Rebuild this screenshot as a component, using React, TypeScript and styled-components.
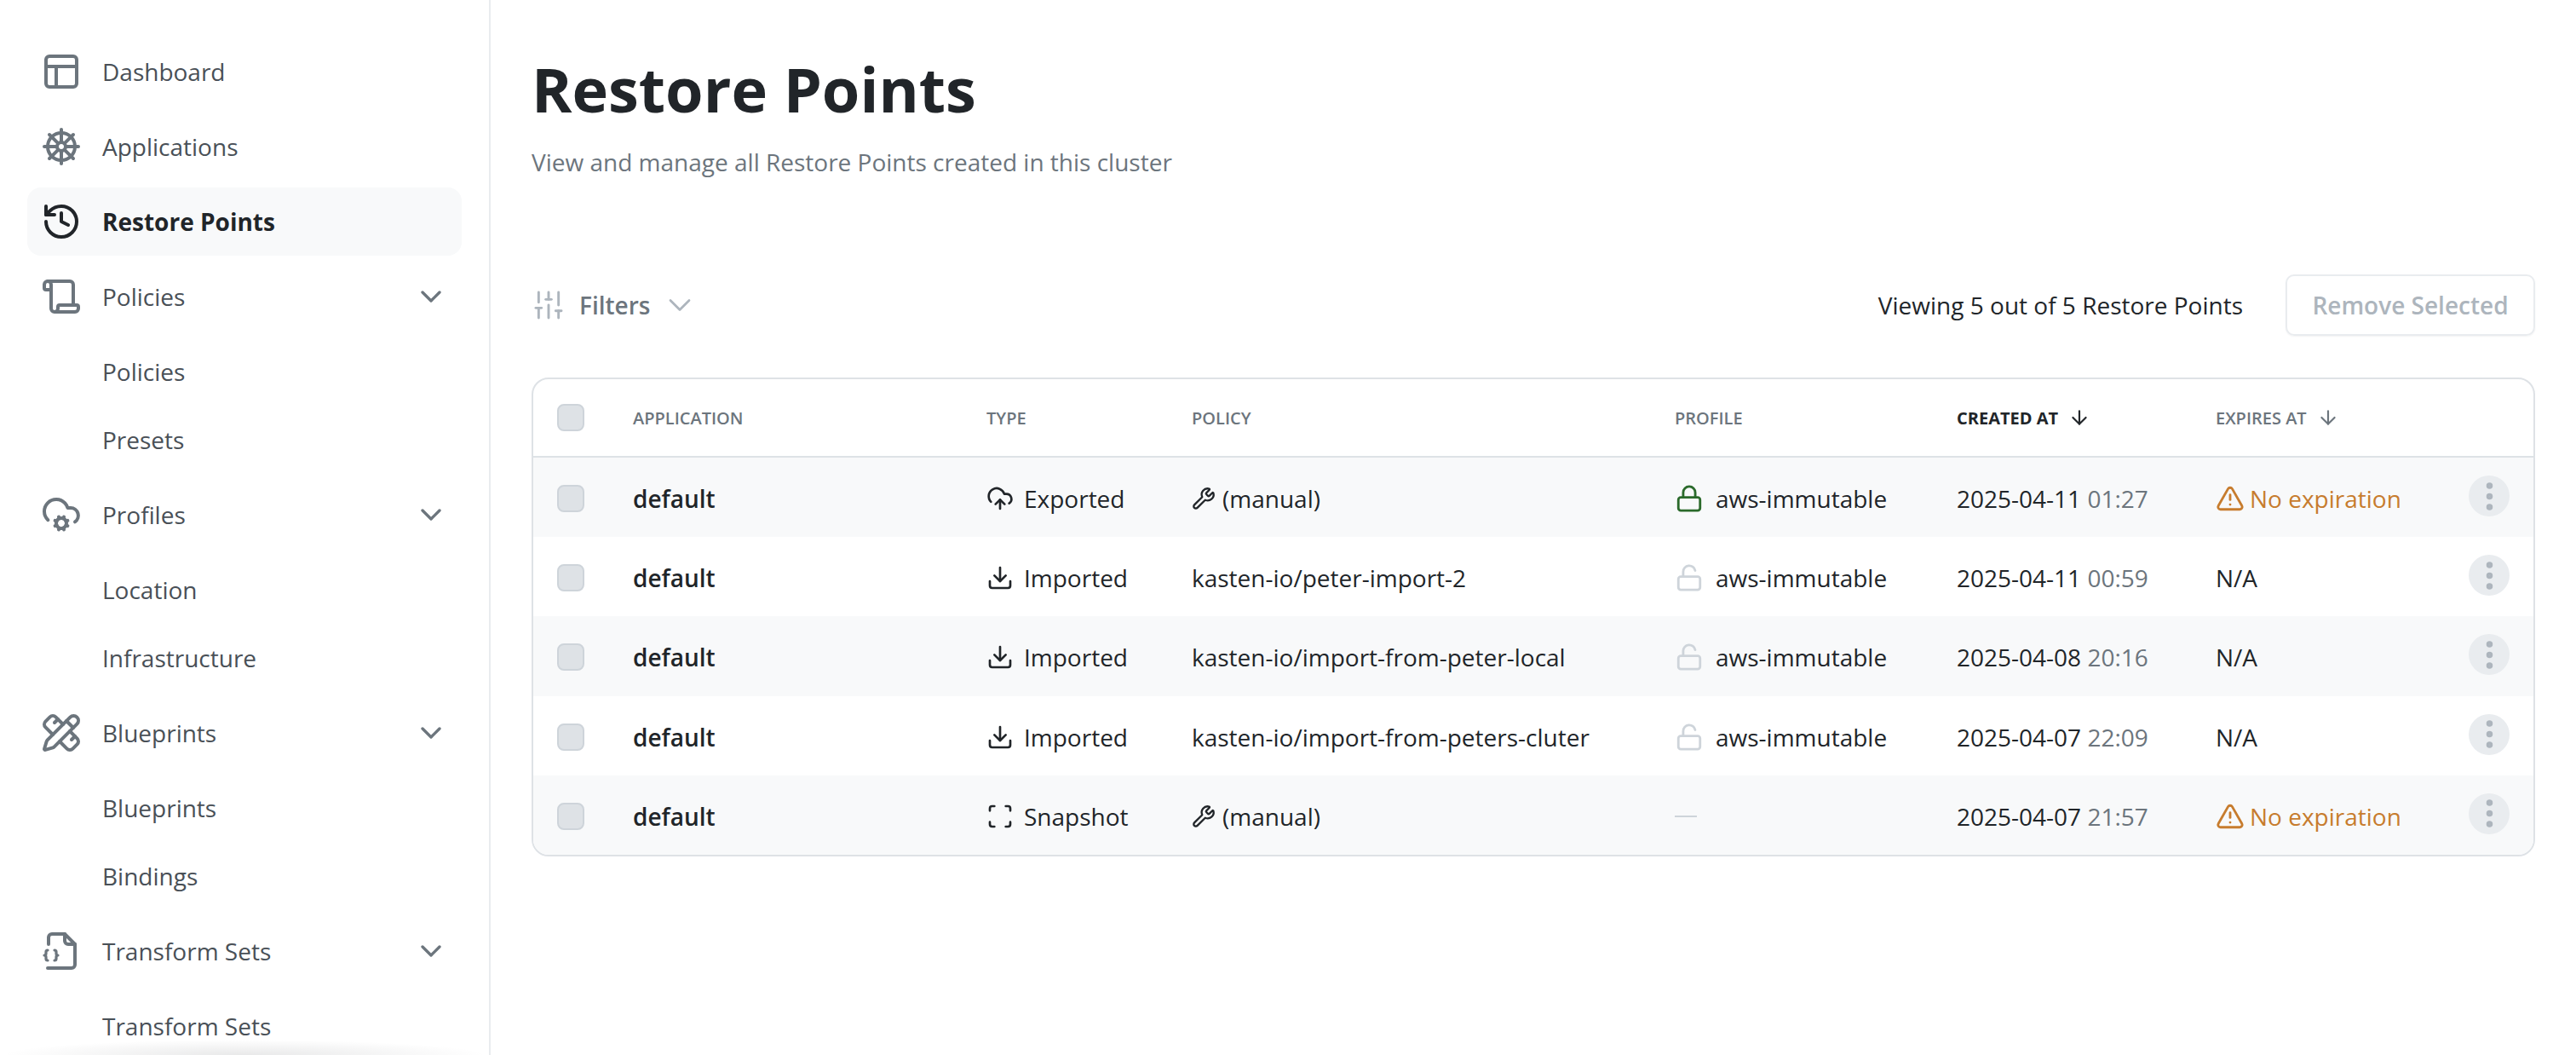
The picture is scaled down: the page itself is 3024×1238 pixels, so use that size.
import React from 'react';
import styled, { createGlobalStyle } from 'styled-components';
import {
  ArrowDown,
  ChevronDown,
  CloudCog,
  CloudUpload,
  Download,
  EllipsisVertical,
  History,
  Lock,
  LockOpen,
  PanelsTopLeft,
  PencilRuler,
  Scan,
  Scroll,
  ShipWheel,
  SlidersVertical,
  TriangleAlert,
  Wrench,
} from 'lucide-react';

type Row = {
  type: 'Exported' | 'Imported' | 'Snapshot';
  policy: string;
  locked: boolean | null;
  date: string;
  time: string;
  noExpiry: boolean;
};

const rows: Row[] = [
  { type: 'Exported', policy: '(manual)', locked: true, date: '2025-04-11', time: '01:27', noExpiry: true },
  { type: 'Imported', policy: 'kasten-io/peter-import-2', locked: false, date: '2025-04-11', time: '00:59', noExpiry: false },
  { type: 'Imported', policy: 'kasten-io/import-from-peter-local', locked: false, date: '2025-04-08', time: '20:16', noExpiry: false },
  { type: 'Imported', policy: 'kasten-io/import-from-peters-cluter', locked: false, date: '2025-04-07', time: '22:09', noExpiry: false },
  { type: 'Snapshot', policy: '(manual)', locked: null, date: '2025-04-07', time: '21:57', noExpiry: true },
];

const typeIcons = {
  Exported: CloudUpload,
  Imported: Download,
  Snapshot: Scan,
};

// file outline with braces hanging off its lower left side
const TransformIcon: React.FC<{ size: number; strokeWidth: number }> = ({ size, strokeWidth }) => (
  <svg
    width={size}
    height={size}
    viewBox="0 0 24 24"
    fill="none"
    stroke="currentColor"
    strokeWidth={strokeWidth}
    strokeLinecap="round"
    strokeLinejoin="round"
  >
    <path d="M4.5 8V4a2 2 0 0 1 2-2H14l6 6v12a2 2 0 0 1-2 2H4" />
    <path d="M14 2v4a2 2 0 0 0 2 2h4" />
    <path
      strokeWidth={1.6}
      d="M4 11.5a1 1 0 0 0-1 1v1a1 1 0 0 1-1 1 1 1 0 0 1 1 1v1a1 1 0 0 0 1 1M8 11.5a1 1 0 0 1 1 1v1a1 1 0 0 0 1 1 1 1 0 0 0-1 1v1a1 1 0 0 1-1 1"
    />
  </svg>
);

const navGroups = [
  { label: 'Dashboard', icon: PanelsTopLeft, children: [] as string[] },
  { label: 'Applications', icon: ShipWheel, children: [] as string[] },
  { label: 'Restore Points', icon: History, children: [] as string[], active: true },
  { label: 'Policies', icon: Scroll, children: ['Policies', 'Presets'] },
  { label: 'Profiles', icon: CloudCog, children: ['Location', 'Infrastructure'] },
  { label: 'Blueprints', icon: PencilRuler, children: ['Blueprints', 'Bindings'] },
  { label: 'Transform Sets', icon: TransformIcon, children: ['Transform Sets'] },
];

const App: React.FC = () => {
  return (
    <>
      <GlobalStyle />
      <Page>
        <Sidebar>
          {navGroups.map((group) => {
            const Icon = group.icon;
            return (
              <NavGroup key={group.label}>
                <NavItem $active={group.active}>
                  <Icon size={48} strokeWidth={2} />
                  <NavLabel>{group.label}</NavLabel>
                  {group.children.length > 0 && <NavChevron size={40} strokeWidth={2} />}
                </NavItem>
                {group.children.map((child) => (
                  <SubItem key={child}>{child}</SubItem>
                ))}
              </NavGroup>
            );
          })}
          <SidebarFade />
        </Sidebar>
        <Main>
          <Title>Restore Points</Title>
          <Subtitle>View and manage all Restore Points created in this cluster</Subtitle>
          <Toolbar>
            <FilterButton>
              <SlidersVertical size={40} strokeWidth={1.75} />
              <span>Filters</span>
              <FilterChevron size={44} strokeWidth={1.5} />
            </FilterButton>
            <ToolbarRight>
              <Counter>Viewing 5 out of 5 Restore Points</Counter>
              <RemoveButton>Remove Selected</RemoveButton>
            </ToolbarRight>
          </Toolbar>
          <Table>
            <HeaderRow>
              <CheckCell>
                <Checkbox />
              </CheckCell>
              <HeadCell>Application</HeadCell>
              <HeadCell>Type</HeadCell>
              <HeadCell>Policy</HeadCell>
              <HeadCell>Profile</HeadCell>
              <HeadCell $active>
                Created at <ArrowDown size={26} strokeWidth={2} />
              </HeadCell>
              <HeadCell>
                Expires at <ArrowDown size={26} strokeWidth={2} />
              </HeadCell>
              <span />
            </HeaderRow>
            {rows.map((row, index) => {
              const TypeIcon = typeIcons[row.type];
              return (
                <BodyRow key={index} $striped={index % 2 === 0}>
                  <CheckCell>
                    <Checkbox />
                  </CheckCell>
                  <AppName>default</AppName>
                  <Cell>
                    <TypeIcon size={32} strokeWidth={2} />
                    {row.type}
                  </Cell>
                  <PolicyCell>
                    {row.policy === '(manual)' && <Wrench size={28} strokeWidth={2} />}
                    {row.policy}
                  </PolicyCell>
                  <ProfileCell>
                    {row.locked === null ? (
                      <EmptyDash />
                    ) : (
                      <>
                        {row.locked ? (
                          <Lock size={34} strokeWidth={2} color="#2b6a2b" />
                        ) : (
                          <LockOpen size={34} strokeWidth={2} color="#ced4da" />
                        )}
                        aws-immutable
                      </>
                    )}
                  </ProfileCell>
                  <Cell>
                    <span>
                      {row.date} <Time>{row.time}</Time>
                    </span>
                  </Cell>
                  {row.noExpiry ? (
                    <ExpiryWarning>
                      <TriangleAlert size={34} strokeWidth={2} />
                      No expiration
                    </ExpiryWarning>
                  ) : (
                    <Cell>N/A</Cell>
                  )}
                  <MenuButton>
                    <EllipsisVertical size={43} strokeWidth={2.2} />
                  </MenuButton>
                </BodyRow>
              );
            })}
          </Table>
        </Main>
      </Page>
    </>
  );
};

export default App;

const GlobalStyle = createGlobalStyle`
  html, body {
    margin: 0;
    padding: 0;
    height: 100%;
    overflow: hidden;
    background: #fff;
  }
  body {
    font-family: 'Open Sans', 'Liberation Sans', sans-serif;
    color: #212529;
  }
  * {
    box-sizing: border-box;
  }
`;

const Page = styled.div`
  display: flex;
  height: 100vh;
`;

const Sidebar = styled.nav`
  position: relative;
  flex: 0 0 576px;
  height: 100%;
  padding: 44px 32px 0;
  border-right: 2px solid #e9ecef;
  overflow: hidden;
  display: flex;
  flex-direction: column;
  gap: 8px;
`;

const SidebarFade = styled.div`
  position: absolute;
  left: 0;
  right: 0;
  bottom: 0;
  height: 18px;
  background: radial-gradient(ellipse at 50% 100%, rgba(33, 37, 41, 0.1), rgba(33, 37, 41, 0) 70%);
`;

const NavGroup = styled.div`
  display: flex;
  flex-direction: column;
  flex-shrink: 0;
  gap: 0;
  > :first-child {
    margin-bottom: 8px;
  }
  > :only-child {
    margin-bottom: 0;
  }
`;

const NavItem = styled.div<{ $active?: boolean }>`
  display: flex;
  align-items: center;
  gap: 24px;
  height: 80px;
  padding: 0 16px;
  border-radius: 16px;
  font-size: 28px;
  font-weight: ${(p) => (p.$active ? 700 : 400)};
  color: ${(p) => (p.$active ? '#212529' : '#495057')};
  background: ${(p) => (p.$active ? '#f8f9fa' : 'transparent')};
  svg {
    flex-shrink: 0;
    color: ${(p) => (p.$active ? '#212529' : '#6c757d')};
  }
`;

const NavLabel = styled.span`
  flex: 1;
`;

const NavChevron = styled(ChevronDown)`
  color: #6c757d;
`;

const SubItem = styled.div`
  display: flex;
  align-items: center;
  height: 80px;
  padding-left: 88px;
  font-size: 28px;
  color: #495057;
`;

const Main = styled.main`
  flex: 1;
  min-width: 0;
  padding: 0 48px;
`;

const Title = styled.h1`
  margin: 55px 0 0;
  font-size: 72px;
  line-height: 98px;
  font-weight: 700;
  color: #212529;
`;

const Subtitle = styled.p`
  margin: 18px 0 0;
  font-size: 28px;
  line-height: 38px;
  color: #6c757d;
`;

const Toolbar = styled.div`
  display: flex;
  align-items: center;
  justify-content: space-between;
  height: 72px;
  margin-top: 113px;
`;

const FilterButton = styled.div`
  display: flex;
  align-items: center;
  gap: 16px;
  font-size: 28px;
  font-weight: 600;
  color: #6c757d;
  svg {
    color: #adb5bd;
    flex-shrink: 0;
  }
`;

const FilterChevron = styled(ChevronDown)`
  margin-left: -3px;
`;

const ToolbarRight = styled.div`
  display: flex;
  align-items: center;
  gap: 50px;
`;

const Counter = styled.span`
  font-size: 28px;
  color: #212529;
`;

const RemoveButton = styled.div`
  display: flex;
  align-items: center;
  justify-content: center;
  width: 293px;
  height: 72px;
  border: 2px solid #e9ecef;
  border-radius: 10px;
  box-shadow: 0 1px 2px rgba(33, 37, 41, 0.06);
  font-size: 28px;
  font-weight: 600;
  color: #adb5bd;
`;

const Table = styled.div`
  margin-top: 49px;
  border: 2px solid #dee2e6;
  border-radius: 20px;
  overflow: hidden;
`;

const columns = '117px 415px 241px 567px 331px 304px 297px 1fr';

const HeaderRow = styled.div`
  display: grid;
  grid-template-columns: ${columns};
  align-items: center;
  height: 92px;
  border-bottom: 2px solid #dee2e6;
`;

const BodyRow = styled.div<{ $striped: boolean }>`
  display: grid;
  grid-template-columns: ${columns};
  align-items: center;
  height: 93.2px;
  padding-top: 3px;
  background: ${(p) => (p.$striped ? '#f8f9fa' : '#fff')};
`;

const CheckCell = styled.div`
  display: flex;
  padding-left: 28px;
`;

const Checkbox = styled.div`
  width: 32px;
  height: 32px;
  border: 2px solid #ced4da;
  border-radius: 8px;
  background: #dee2e6;
`;

const HeadCell = styled.div<{ $active?: boolean }>`
  display: flex;
  align-items: center;
  gap: 12px;
  font-size: 20px;
  font-weight: ${(p) => (p.$active ? 700 : 600)};
  text-transform: uppercase;
  color: ${(p) => (p.$active ? '#212529' : '#6c757d')};
`;

const Cell = styled.div`
  display: flex;
  align-items: center;
  gap: 12px;
  font-size: 28px;
  color: #212529;
  white-space: nowrap;
  svg {
    flex-shrink: 0;
  }
`;

const AppName = styled(Cell)`
  font-weight: 600;
`;

const PolicyCell = styled(Cell)`
  gap: 8px;
`;

const ProfileCell = styled(Cell)`
  gap: 14px;
`;

const Time = styled.span`
  color: #6c757d;
`;

const ExpiryWarning = styled(Cell)`
  gap: 6px;
  color: #c77c2e;
`;

const EmptyDash = styled.div`
  width: 26px;
  height: 2px;
  background: #ced4da;
`;

const MenuButton = styled.div`
  display: flex;
  align-items: center;
  justify-content: center;
  width: 48px;
  height: 48px;
  margin-bottom: 6px;
  border-radius: 50%;
  background: #e9ecef;
  color: #adb5bd;
`;
